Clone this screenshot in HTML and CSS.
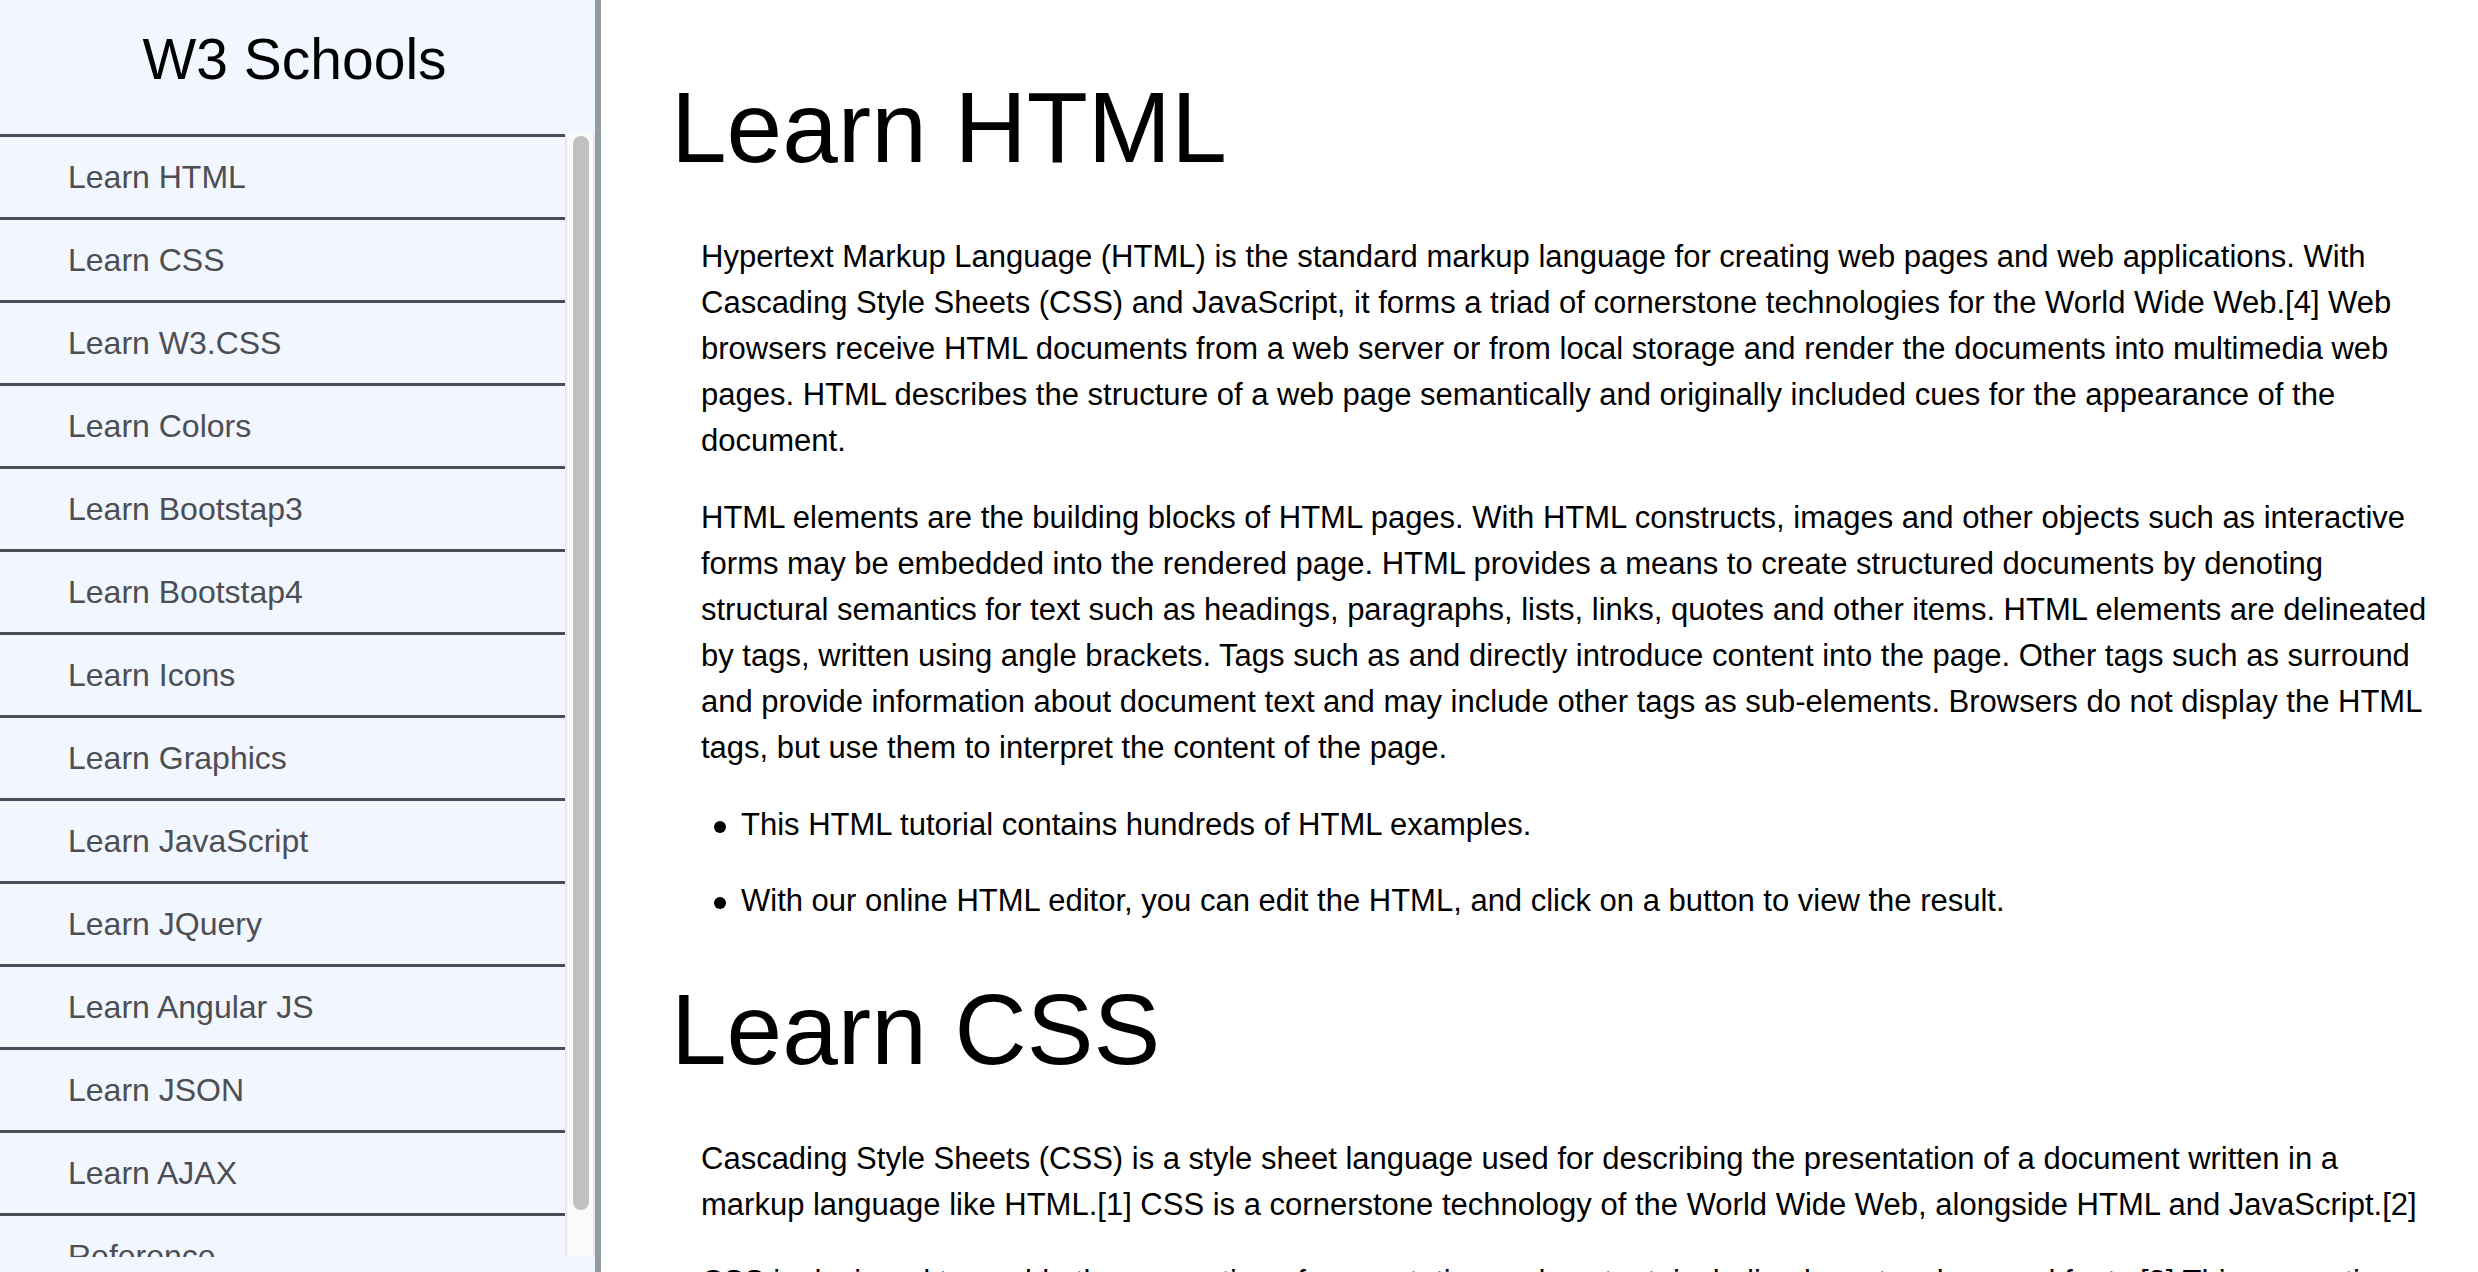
FILE: index.html
```html
<!DOCTYPE html>
<html lang="en">
<head>
  <meta charset="utf-8">
  <meta name="viewport" content="width=device-width, initial-scale=1">
  <title>W3 Schools</title>
  <link rel="stylesheet" href="styles.css">
</head>
<body>
  <div class="layout">
    <nav class="sidebar" aria-label="Tutorials">
      <header class="sidebar-title">W3 Schools</header>
      <div class="sidebar-scroller">
        <ul class="sidebar-list">
          <li><a class="nav-link" href="#html">Learn HTML</a></li>
          <li><a class="nav-link" href="#css">Learn CSS</a></li>
          <li><a class="nav-link" href="#w3css">Learn W3.CSS</a></li>
          <li><a class="nav-link" href="#colors">Learn Colors</a></li>
          <li><a class="nav-link" href="#bootstrap3">Learn Bootstap3</a></li>
          <li><a class="nav-link" href="#bootstrap4">Learn Bootstap4</a></li>
          <li><a class="nav-link" href="#icons">Learn Icons</a></li>
          <li><a class="nav-link" href="#graphics">Learn Graphics</a></li>
          <li><a class="nav-link" href="#javascript">Learn JavaScript</a></li>
          <li><a class="nav-link" href="#jquery">Learn JQuery</a></li>
          <li><a class="nav-link" href="#angular">Learn Angular JS</a></li>
          <li><a class="nav-link" href="#json">Learn JSON</a></li>
          <li><a class="nav-link" href="#ajax">Learn AJAX</a></li>
          <li><a class="nav-link" href="#reference">Reference</a></li>
        </ul>
        <div class="scroll-track" aria-hidden="true">
          <div class="scroll-thumb"></div>
        </div>
      </div>
    </nav>
    <main class="content">
      <section class="topic" id="html">
        <h1 class="topic-title">Learn HTML</h1>
        <div class="topic-body">
          <p>Hypertext Markup Language (HTML) is the standard markup language for creating web pages and web applications. With Cascading Style Sheets (CSS) and JavaScript, it forms a triad of cornerstone technologies for the World Wide Web.[4] Web browsers receive HTML documents from a web server or from local storage and render the documents into multimedia web pages. HTML describes the structure of a web page semantically and originally included cues for the appearance of the document.</p>
          <p>HTML elements are the building blocks of HTML pages. With HTML constructs, images and other objects such as interactive forms may be embedded into the rendered page. HTML provides a means to create structured documents by denoting structural semantics for text such as headings, paragraphs, lists, links, quotes and other items. HTML elements are delineated by tags, written using angle brackets. Tags such as and directly introduce content into the page. Other tags such as surround and provide information about document text and may include other tags as sub-elements. Browsers do not display the HTML tags, but use them to interpret the content of the page.</p>
          <ul class="topic-list">
            <li>This HTML tutorial contains hundreds of HTML examples.</li>
            <li>With our online HTML editor, you can edit the HTML, and click on a button to view the result.</li>
          </ul>
        </div>
      </section>
      <section class="topic" id="css">
        <h1 class="topic-title">Learn CSS</h1>
        <div class="topic-body">
          <p>Cascading Style Sheets (CSS) is a style sheet language used for describing the presentation of a document written in a markup language like HTML.[1] CSS is a cornerstone technology of the World Wide Web, alongside HTML and JavaScript.[2]</p>
          <p>CSS is designed to enable the separation of presentation and content, including layout, colors, and fonts.[3] This separation</p>
        </div>
      </section>
    </main>
  </div>
</body>
</html>
```

FILE: styles.css
```css
* {
  box-sizing: border-box;
}

body {
  margin: 0;
  background: #fff;
  color: #000;
  font-family: "Liberation Sans", Arial, sans-serif;
  font-size: 31px;
  line-height: 46px;
}

.layout {
  display: flex;
  align-items: flex-start;
}

/* Sidebar stays in view while the topics scroll */
.sidebar {
  position: sticky;
  top: 0;
  display: flex;
  flex-direction: column;
  flex: 0 0 601px;
  height: 100vh;
  padding-bottom: 15px;
  border-right: 6px solid #949da2;
  background: #f2f6ff;
}

.sidebar-title {
  padding: 25px 6px 41px 0;
  font-size: 57px;
  line-height: 68px;
  text-align: center;
}

.sidebar-scroller {
  display: flex;
  flex: 1;
  min-height: 0;
}

.sidebar-list {
  flex: 1;
  margin: 0;
  padding: 0;
  list-style: none;
  overflow-y: auto;
  scrollbar-width: none;
}

.scroll-track {
  width: 30px;
  padding: 2px 4px 2px 6px;
  border: solid #e8e8e8;
  border-width: 0 2px;
  background: #fafafa;
}

.scroll-thumb {
  height: 96%;
  border-radius: 8px;
  background: #c1c1c1;
}

.nav-link {
  display: block;
  padding-left: 68px;
  border-top: 3px solid #4d4e53;
  color: #4d4e53;
  font-size: 32px;
  line-height: 80px;
  text-decoration: none;
}

.content {
  flex: 1;
  padding: 22px 48px 30px 70px;
}

.topic-title {
  margin: 30px 0 32px;
  font-size: 100px;
  font-weight: 400;
  line-height: 150px;
}

.topic-body {
  padding-left: 30px;
}

.topic-body p {
  margin: 0 0 31px;
}

.topic-list {
  margin: 0;
  padding-left: 13px;
  list-style: none;
}

.topic-list li {
  display: flex;
  gap: 15px;
  margin-bottom: 30px;
}

.topic-list li::before {
  content: "";
  flex: none;
  width: 12px;
  height: 12px;
  margin-top: 19px;
  border-radius: 50%;
  background: #000;
}
```
